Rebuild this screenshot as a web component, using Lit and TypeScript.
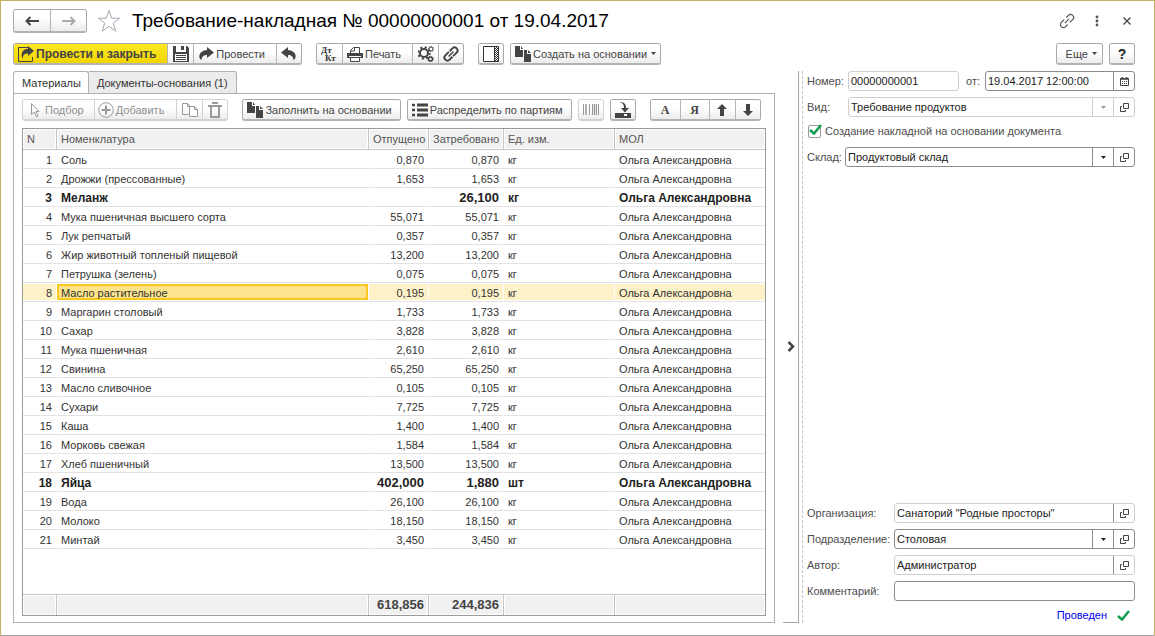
import { LitElement, html, css, svg, nothing, type TemplateResult } from "lit";
import { customElement, state } from "lit/decorators.js";
import { classMap } from "lit/directives/class-map.js";

interface Line {
  name: string;
  issued: string;
  requested: string;
  unit: string;
  bold?: boolean;
}

const PERSON = "Ольга Александровна";

const LINES: Line[] = [
  { name: "Соль", issued: "0,870", requested: "0,870", unit: "кг" },
  { name: "Дрожжи (прессованные)", issued: "1,653", requested: "1,653", unit: "кг" },
  { name: "Меланж", issued: "", requested: "26,100", unit: "кг", bold: true },
  { name: "Мука пшеничная высшего сорта", issued: "55,071", requested: "55,071", unit: "кг" },
  { name: "Лук репчатый", issued: "0,357", requested: "0,357", unit: "кг" },
  { name: "Жир животный топленый пищевой", issued: "13,200", requested: "13,200", unit: "кг" },
  { name: "Петрушка (зелень)", issued: "0,075", requested: "0,075", unit: "кг" },
  { name: "Масло растительное", issued: "0,195", requested: "0,195", unit: "кг" },
  { name: "Маргарин столовый", issued: "1,733", requested: "1,733", unit: "кг" },
  { name: "Сахар", issued: "3,828", requested: "3,828", unit: "кг" },
  { name: "Мука пшеничная", issued: "2,610", requested: "2,610", unit: "кг" },
  { name: "Свинина", issued: "65,250", requested: "65,250", unit: "кг" },
  { name: "Масло сливочное", issued: "0,105", requested: "0,105", unit: "кг" },
  { name: "Сухари", issued: "7,725", requested: "7,725", unit: "кг" },
  { name: "Каша", issued: "1,400", requested: "1,400", unit: "кг" },
  { name: "Морковь свежая", issued: "1,584", requested: "1,584", unit: "кг" },
  { name: "Хлеб пшеничный", issued: "13,500", requested: "13,500", unit: "кг" },
  { name: "Яйца", issued: "402,000", requested: "1,880", unit: "шт", bold: true },
  { name: "Вода", issued: "26,100", requested: "26,100", unit: "кг" },
  { name: "Молоко", issued: "18,150", requested: "18,150", unit: "кг" },
  { name: "Минтай", issued: "3,450", requested: "3,450", unit: "кг" },
];

const icon = (w: number, h: number, body: TemplateResult | unknown) =>
  html`<svg width=${w} height=${h} viewBox="0 0 ${w} ${h}" fill="none" aria-hidden="true">${body}</svg>`;

const pages = svg`
  <path d="M0 0h5v4h3v7H0z" fill="currentColor"/>
  <path d="M6 0l2 3H6z" fill="currentColor"/>
  <path d="M9 4h3v4h4v8H9z" fill="currentColor"/>
  <path d="M13 4l3 3h-3z" fill="currentColor"/>`;

const icons = {
  back: icon(14, 10, svg`<path d="M1 5h13M5.500 1L1.500 5l4 4" stroke="#444" stroke-width="2"/>`),
  forward: icon(14, 10, svg`<path d="M0 5h13M8.500 1l4 4-4 4" stroke="#aaa" stroke-width="2"/>`),
  star: icon(24, 24, svg`<path d="M12 1.500l2.700 7.700h8l-6.400 4.900 2.400 8L12 17.300l-6.700 4.800 2.400-8L1.300 9.200h8z" stroke="#a3aab2"/>`),
  link: icon(16, 16, svg`<g stroke="#555" stroke-width="1.200" transform="rotate(-45 8 8)">
    <path d="M7 5H3a3 3 0 0 0 0 6h3M9 11h4a3 3 0 0 0 0-6h-3M5 8h6"/></g>`),
  dots: icon(4, 12, svg`<circle cx="2" cy="2" r="1.400" fill="#555"/><circle cx="2" cy="6" r="1.400" fill="#555"/><circle cx="2" cy="10" r="1.400" fill="#555"/>`),
  close: icon(8, 8, svg`<path d="M.5.500l7 7M7.500.500l-7 7" stroke="#444" stroke-width="1.300"/>`),
  postClose: icon(16, 16, svg`
    <path d="M10 1.500H.5v14h14V11" stroke="#444"/>
    <path d="M10 0l6 5-6 5V7.500c-3 0-5 1-5.500 5.500C2 7 5 3 10 2.800z" fill="#444"/>`),
  save: icon(16, 16, svg`
    <path d="M0 0h3v6h10V0h1l2 2v14H0z" fill="#444"/><path d="M8 0h3v4H8z" fill="#444"/>
    <path d="M2 8h12v7H2z" fill="#fff"/><path d="M3 9.500h10M3 11.500h10M3 13.500h10" stroke="#444"/>`),
  post: icon(16, 14, svg`<path d="M9 0l7 5.500L9 11V8C6 8 4 9 3.500 13 0 12 0 3.500 9 3z" fill="#444"/>`),
  undo: icon(16, 14, svg`<path d="M7 0L0 5.500 7 11V8c3 0 5 1 5.500 5C16 12 16 3.500 7 3z" fill="#444"/>`),
  debit: icon(16, 16, svg`
    <text class="ledger" x="0" y="7">Дт</text><text class="ledger" x="4" y="15">Кт</text>`),
  print: icon(16, 16, svg`
    <path d="M3.500 7V4.500l3-3h6V7" stroke="#444"/><path d="M7.500 1v4H3" stroke="#444"/>
    <path d="M0 7h16v5H0z" fill="#444"/><path d="M2 10.500h12" stroke="#fff"/>
    <path d="M3.500 11.500h9v4h-9z" fill="#fff" stroke="#444"/>`),
  gears: icon(16, 16, svg`
    <circle cx="6" cy="7" r="4" stroke="#444" stroke-width="2"/>
    <circle cx="6" cy="7" r="5.700" stroke="#444" stroke-width="2" stroke-dasharray="2 2.480"/>
    <circle cx="13" cy="3" r="2" stroke="#444"/><circle cx="13" cy="3" r="2.600" stroke="#444" stroke-dasharray="1 1"/>
    <circle cx="12.500" cy="13" r="2" stroke="#444" stroke-width="1.500"/>
    <circle cx="12.500" cy="13" r="2.800" stroke="#444" stroke-dasharray="1 1.200"/>`),
  clip: icon(16, 16, svg`<g stroke="#444" stroke-width="2" transform="rotate(-45 8 8)">
    <path d="M8 5H3a3 3 0 0 0 0 6h4M8 11h5a3 3 0 0 0 0-6H9"/><path d="M4.500 8h7" stroke-width="1.500"/></g>`),
  layout: icon(16, 16, svg`
    <path d="M.5.500h15v15H.5z" stroke="#333" fill="#fff"/><path d="M11.500 1v14" stroke="#333"/>
    <path d="M13.500 1v14" stroke="#333" stroke-dasharray="1 1"/><path d="M12.500 2v13M14.500 2v13" stroke="#333" stroke-dasharray="1 1"/>`),
  pages: icon(16, 16, pages),
  cursor: icon(10, 16, svg`<path d="M1.500 1.500v11l2.500-2.500 2.500 5 1.500-1-2-4.500h3z" stroke="#999"/>`),
  add: icon(16, 16, svg`<circle cx="8" cy="8" r="7.300" stroke="#999"/><path d="M8 3.500v9M3.500 8h9" stroke="#999" stroke-width="2"/>`),
  copy: icon(16, 16, svg`
    <path d="M6.500 12.500h-6V1.500h5l3 3V6" stroke="#999"/><path d="M5.500 1.500v3h3" stroke="#999"/>
    <path d="M7.500 4.500h5l3 3v7h-8z" stroke="#999" fill="#fff"/><path d="M12.500 4.500v3h3" stroke="#999"/>`),
  trash: icon(14, 16, svg`<path d="M4 1h6M0 4h14" stroke="#999" stroke-width="2"/><path d="M3 5v10h8V5" stroke="#999" stroke-width="2"/>`),
  list: icon(16, 14, svg`<path d="M5 2h11M5 7h11M5 12h11" stroke="#444" stroke-width="3"/>
    <path d="M0 2h3M0 7h3M0 12h3" stroke="#444" stroke-width="2.500"/>`),
  barcode: icon(16, 11, svg`<path d="M.5 0v11M6.500 0v11M9.500 0v11M13.500 0v11M15.500 0v11" stroke="#999"/>
    <path d="M3 0v11M11.500 0v11" stroke="#999" stroke-width="1.500"/>`),
  terminal: icon(16, 16, svg`<path d="M0 11h16v5H0z" fill="#444"/><path d="M9 12h3v2H9z" fill="#fff"/>
    <path d="M5 0c4 0 6 2 6 6h3l-4 4.500L6 6h3c0-3-1-5-4-6z" fill="#444"/>`),
  up: icon(10, 12, svg`<path d="M5 0l5 5H7v7H3V5H0z" fill="#444"/>`),
  down: icon(10, 12, svg`<path d="M5 12l5-5H7V0H3v7H0z" fill="#444"/>`),
  caret: icon(5, 3, svg`<path d="M0 0h5L2.500 3z" fill="currentColor"/>`),
  open: icon(9, 9, svg`<path d="M3.500.500h5v5h-5z" stroke="#444"/><path d="M2 3.500H.5v5h5V7" stroke="#444"/>`),
  calendar: icon(9, 9, svg`<path d="M.5 1.500h8v7h-8z" stroke="#444"/><path d="M0 2h9M2.500 0v2M6.500 0v2" stroke="#444" stroke-width="1.500"/>
    <path d="M2 4.500h5M2 6.500h5" stroke="#444" stroke-dasharray="1 1"/>`),
  tick: icon(13, 11, svg`<path d="M1 6l4 3.500L12 1" stroke="#0f9d4f" stroke-width="2.500"/>`),
  chevron: icon(8, 11, svg`<path d="M1.500 1l4.500 4.500L1.500 10" stroke="#444" stroke-width="2.500"/>`),
};

@customElement("app-root")
export class AppRoot extends LitElement {
  @state() private selected = 7;

  static styles = css`
    :host { display: block; font: 11px/14px "Liberation Sans", Arial, sans-serif; color: #333; }
    * { box-sizing: border-box; }
    svg { display: block; flex: none; }
    button, input, select { font: inherit; color: inherit; margin: 0; }
    .page {
      min-height: 100vh; display: flex; flex-direction: column; background: #fff;
      border: 1px solid #c3b062; border-bottom-color: #a0a0a0; padding: 8px 19px 12px 12px;
    }
    .row { display: flex; align-items: center; }
    .space { flex: 1; }

    .titlebar { height: 24px; margin-bottom: 10px; }
    .titlebar h1 { font-size: 19px; line-height: 24px; font-weight: 400; color: #000; margin: 0 0 0 11px; white-space: nowrap; }
    .titlebar .star { margin-left: 10px; }
    .plain { border: 0; padding: 0; background: none; display: flex; align-items: center; justify-content: center; }
    .tools { gap: 20px; }
    .tools .shut { width: 16px; height: 16px; }

    .group { display: flex; height: 22px; border: 1px solid #a9a9a9; border-bottom: 2px solid #b4b4b4; border-radius: 3px; overflow: hidden; flex: none; }
    .group.off { border-color: #d2d2d2; color: #8f8f8f; }
    .group button {
      border: 0; border-left: 1px solid #b4b4b4; padding: 0 11px 0 4px; display: flex; align-items: center; gap: 2px;
      background: linear-gradient(#fff 40%, #ececec); white-space: nowrap; color: #444;
    }
    .group button:first-child { border-left: 0; }
    .group.off button { color: #8f8f8f; border-left-color: #d2d2d2; }
    .group .sq { width: 26px; padding: 0; justify-content: center; }
    .group .sq:first-child, .group .sq:last-child { width: 25px; }
    .group.solo .sq { width: 24px; }
    .group .wide, .group .wide:first-child { width: 29px; }
    .group .pick { padding: 0 10px 0 7px; gap: 5px; }
    .group .add { padding: 0 12px 0 3px; }
    .group .fill { padding-right: 8px; }
    .group .more { padding: 0 5px 0 9px; }
    .group .make { padding: 0 4px; }
    .more svg, .make svg:last-child { margin-left: 2px; }
    .group .main { background: linear-gradient(#ffe926, #f2d500); font-size: 12px; font-weight: 700; }
    .group.nav { height: 24px; }
    .group.nav button { width: 36px; padding: 0; justify-content: center; }
    .group .letter { font: 700 12px/14px "Liberation Serif", serif; }
    .group .help { font: 700 14px/16px "Liberation Sans", sans-serif; color: #222; }
    .ledger { font: 700 9px "Liberation Serif", serif; fill: #333; }
    .commands { margin-bottom: 6px; gap: 14px; }
    .pair { display: flex; gap: 6px; }

    .body { flex: 1; display: flex; align-items: stretch; }
    .left { flex: 1; min-width: 0; display: flex; flex-direction: column; }
    .tabs { display: flex; }
    .tabs button {
      height: 23px; margin-bottom: -1px; padding: 0 8px; border: 1px solid #b0b0b0; border-left: 0;
      background: #ececec; border-radius: 0 3px 0 0; white-space: nowrap;
    }
    .tabs .current { background: #fff; padding-right: 7px; border-left: 1px solid #b0b0b0; border-bottom-color: #fff; border-radius: 3px 3px 0 0; }
    .panel { flex: 1; display: flex; flex-direction: column; border: 1px solid #b0b0b0; padding: 5px 8px 6px; }
    .panel .bar { gap: 14px; margin-bottom: 7px; }

    .grid { flex: 1; display: flex; border: 1px solid #999; }
    table { width: 100%; table-layout: fixed; border-collapse: separate; border-spacing: 0; }
    col.n { width: 34px; } col.issued { width: 60px; } col.requested { width: 75px; }
    col.unit { width: 111px; } col.person { width: 150px; }
    th, td { padding: 0 4px; text-align: left; overflow: hidden; white-space: nowrap; font-weight: 400; }
    th, tfoot td { height: 21px; background: #f1f1f1; color: #555; border-right: 1px solid #c4c4c4; box-shadow: inset 0 0 0 1px #fff; }
    th { border-bottom: 1px solid #c4c4c4; }
    tfoot td { border-top: 1px solid #c4c4c4; font-weight: 700; font-size: 13px; color: #444; }
    th:last-child, tfoot td:last-child { border-right: 0; }
    tbody td { height: 19px; padding-top: 2px; border-right: 1px solid #fff; border-bottom: 1px solid #e2e2e2; }
    tbody td:last-child { border-right: 0; }
    .num { text-align: right; }
    .bold td { font-weight: 700; font-size: 12px; color: #222; }
    .bold .num { font-size: 13px; }
    .bold .num:first-child { font-size: 12px; }
    .chosen td { background: #fdf1c8; box-shadow: inset 0 1px #fff, inset 0 -1px #fff; }
    .chosen .cell {
      background: #fde38b;
      box-shadow: inset 0 1px #fff, inset 0 -1px #fff, inset 2px 0 #fac71d, inset -2px 0 #fac71d, inset 0 3px #fac71d, inset 0 -3px #fac71d;
    }
    .filler td { height: auto; border: 0; }

    .splitter { flex: none; width: 16px; margin: 0 3px 0 8px; padding: 0 0 0 4px; border: 0; border-right: 1px solid #a5a5a5; border-bottom: 1px solid #a5a5a5; background: none; display: flex; align-items: center; }
    .side { flex: none; width: 333px; display: flex; flex-direction: column; gap: 6px; border-left: 1px dashed #c4c4c4; padding-left: 4px; color: #4d4d4d; }
    .side .row { height: 20px; }
    .side .cap { flex: none; width: 41px; white-space: nowrap; }
    .side .cap.short { width: 38px; }
    .side .cap.long { width: 87px; }
    .side .cap.from { width: 19px; margin-left: 7px; }
    .side .check { height: 18px; gap: 3px; padding-bottom: 2px; }
    .field { flex: 1; min-width: 0; height: 20px; display: flex; border: 1px solid #8c8c8c; border-radius: 3px; background: #fff; color: #222; overflow: hidden; }
    .field.dim { border-color: #cfcfcf; }
    .field input, .field select { flex: 1; min-width: 0; width: 100%; border: 0; outline: 0; padding: 0 2px; background: none; appearance: none; height: 18px; }
    .field button { flex: none; width: 21px; border: 0; border-left: 1px solid #8c8c8c; background: none; padding: 0; display: flex; align-items: center; justify-content: center; }
    .field.soft button, .field.soft .arrow { border-color: #cfcfcf; color: #999; }
    .combo { flex: 1; min-width: 0; display: grid; grid-template-columns: 1fr 21px; }
    .combo select { grid-area: 1 / 1 / 2 / 3; }
    .arrow { grid-area: 1 / 2; border-left: 1px solid #8c8c8c; display: flex; align-items: center; justify-content: center; pointer-events: none; }
    .number { flex: none; width: 111px; }
    .tickbox { position: relative; width: 15px; height: 15px; }
    .tickbox input { display: block; appearance: none; width: 13px; height: 13px; margin: 1px; border: 1px solid #999; border-radius: 2px; background: #fff; }
    .tickbox svg { position: absolute; left: 2px; top: 0; pointer-events: none; }
    .side .status { height: 16px; justify-content: flex-end; gap: 10px; padding-right: 5px; }
    .status a { color: #0000f0; text-decoration: none; }
  `;

  private combo(id: string, value: string, look = "") {
    return html`<div class="field ${look}">
      <div class="combo">
        <select id=${id}><option>${value}</option></select>
        <span class="arrow">${icons.caret}</span>
      </div>
      <button aria-label="Открыть">${icons.open}</button>
    </div>`;
  }

  private reference(id: string, value: string) {
    return html`<div class="field dim">
      <input id=${id} .value=${value} />
      <button aria-label="Открыть">${icons.open}</button>
    </div>`;
  }

  private renderLine(line: Line, index: number) {
    const classes = classMap({ bold: !!line.bold, chosen: index === this.selected });
    return html`<tr class=${classes} @click=${() => (this.selected = index)}>
      <td class="num">${index + 1}</td>
      <td class="cell">${line.name}</td>
      <td class="num">${line.issued}</td>
      <td class="num">${line.requested}</td>
      <td>${line.unit}</td>
      <td>${PERSON}</td>
    </tr>`;
  }

  private renderTable() {
    return html`<div class="grid"><table>
      <colgroup><col class="n" /><col /><col class="issued" /><col class="requested" /><col class="unit" /><col class="person" /></colgroup>
      <thead><tr><th>N</th><th>Номенклатура</th><th>Отпущено</th><th>Затребовано</th><th>Ед. изм.</th><th>МОЛ</th></tr></thead>
      <tbody>
        ${LINES.map((line, i) => this.renderLine(line, i))}
        <tr class="filler"><td colspan="6">${nothing}</td></tr>
      </tbody>
      <tfoot><tr><td></td><td></td><td class="num">618,856</td><td class="num">244,836</td><td></td><td></td></tr></tfoot>
    </table></div>`;
  }

  render() {
    return html`<div class="page">
      <header class="titlebar row">
        <div class="group nav">
          <button aria-label="Назад">${icons.back}</button>
          <button aria-label="Вперед">${icons.forward}</button>
        </div>
        <button class="plain star" aria-label="Избранное">${icons.star}</button>
        <h1>Требование-накладная № 00000000001 от 19.04.2017</h1>
        <span class="space"></span>
        <div class="tools row">
          <button class="plain" aria-label="Ссылка">${icons.link}</button>
          <button class="plain" aria-label="Меню">${icons.dots}</button>
          <button class="plain shut" aria-label="Закрыть">${icons.close}</button>
        </div>
      </header>

      <div class="commands row">
        <div class="group">
          <button class="main">${icons.postClose}Провести и закрыть</button>
          <button class="sq" aria-label="Записать">${icons.save}</button>
          <button>${icons.post}Провести</button>
          <button class="sq" aria-label="Отменить проведение">${icons.undo}</button>
        </div>
        <div class="group">
          <button class="sq" aria-label="Проводки">${icons.debit}</button>
          <button>${icons.print}Печать</button>
          <button class="sq" aria-label="Настройки">${icons.gears}</button>
          <button class="sq" aria-label="Файлы">${icons.clip}</button>
        </div>
        <div class="pair">
          <div class="group solo"><button class="sq" aria-label="Панель">${icons.layout}</button></div>
          <div class="group"><button class="make">${icons.pages}Создать на основании ${icons.caret}</button></div>
        </div>
        <span class="space"></span>
        <div class="pair">
          <div class="group"><button class="more">Еще ${icons.caret}</button></div>
          <div class="group solo"><button class="sq help" aria-label="Справка">?</button></div>
        </div>
      </div>

      <main class="body">
        <section class="left">
          <div class="tabs" role="tablist">
            <button class="current" role="tab" aria-selected="true">Материалы</button>
            <button role="tab" aria-selected="false">Документы-основания (1)</button>
          </div>
          <div class="panel">
            <div class="bar row">
              <div class="group off">
                <button class="pick">${icons.cursor}Подбор</button>
                <button class="add">${icons.add}Добавить</button>
                <button class="sq" aria-label="Скопировать">${icons.copy}</button>
                <button class="sq" aria-label="Удалить">${icons.trash}</button>
              </div>
              <div class="pair">
                <div class="group"><button class="fill">${icons.pages}Заполнить на основании</button></div>
                <div class="group"><button class="fill">${icons.list}Распределить по партиям</button></div>
                <div class="group off solo"><button class="sq" aria-label="Штрихкод">${icons.barcode}</button></div>
                <div class="group solo"><button class="sq" aria-label="Терминал">${icons.terminal}</button></div>
              </div>
              <div class="group">
                <button class="sq wide letter">А</button>
                <button class="sq wide letter">Я</button>
                <button class="sq" aria-label="Вверх">${icons.up}</button>
                <button class="sq" aria-label="Вниз">${icons.down}</button>
              </div>
            </div>
            ${this.renderTable()}
          </div>
        </section>

        <button class="splitter" aria-label="Свернуть">${icons.chevron}</button>

        <aside class="side">
          <div class="row">
            <label class="cap" for="number">Номер:</label>
            <div class="field dim number"><input id="number" value="00000000001" /></div>
            <label class="cap from" for="date">от:</label>
            <div class="field"><input id="date" value="19.04.2017 12:00:00" /><button aria-label="Календарь">${icons.calendar}</button></div>
          </div>
          <div class="row">
            <label class="cap" for="kind">Вид:</label>${this.combo("kind", "Требование продуктов", "dim soft")}
          </div>
          <div class="row check">
            <span class="tickbox"><input type="checkbox" id="based" checked />${icons.tick}</span>
            <label for="based">Создание накладной на основании документа</label>
          </div>
          <div class="row">
            <label class="cap short" for="store">Склад:</label>${this.combo("store", "Продуктовый склад")}
          </div>
          <span class="space"></span>
          <div class="row">
            <label class="cap long" for="org">Организация:</label>${this.reference("org", 'Санаторий "Родные просторы"')}
          </div>
          <div class="row">
            <label class="cap long" for="unit">Подразделение:</label>${this.combo("unit", "Столовая")}
          </div>
          <div class="row">
            <label class="cap long" for="author">Автор:</label>${this.reference("author", "Администратор")}
          </div>
          <div class="row">
            <label class="cap long" for="comment">Комментарий:</label>
            <div class="field"><input id="comment" /></div>
          </div>
          <div class="row status"><a href="#">Проведен</a>${icons.tick}</div>
        </aside>
      </main>
    </div>`;
  }
}
